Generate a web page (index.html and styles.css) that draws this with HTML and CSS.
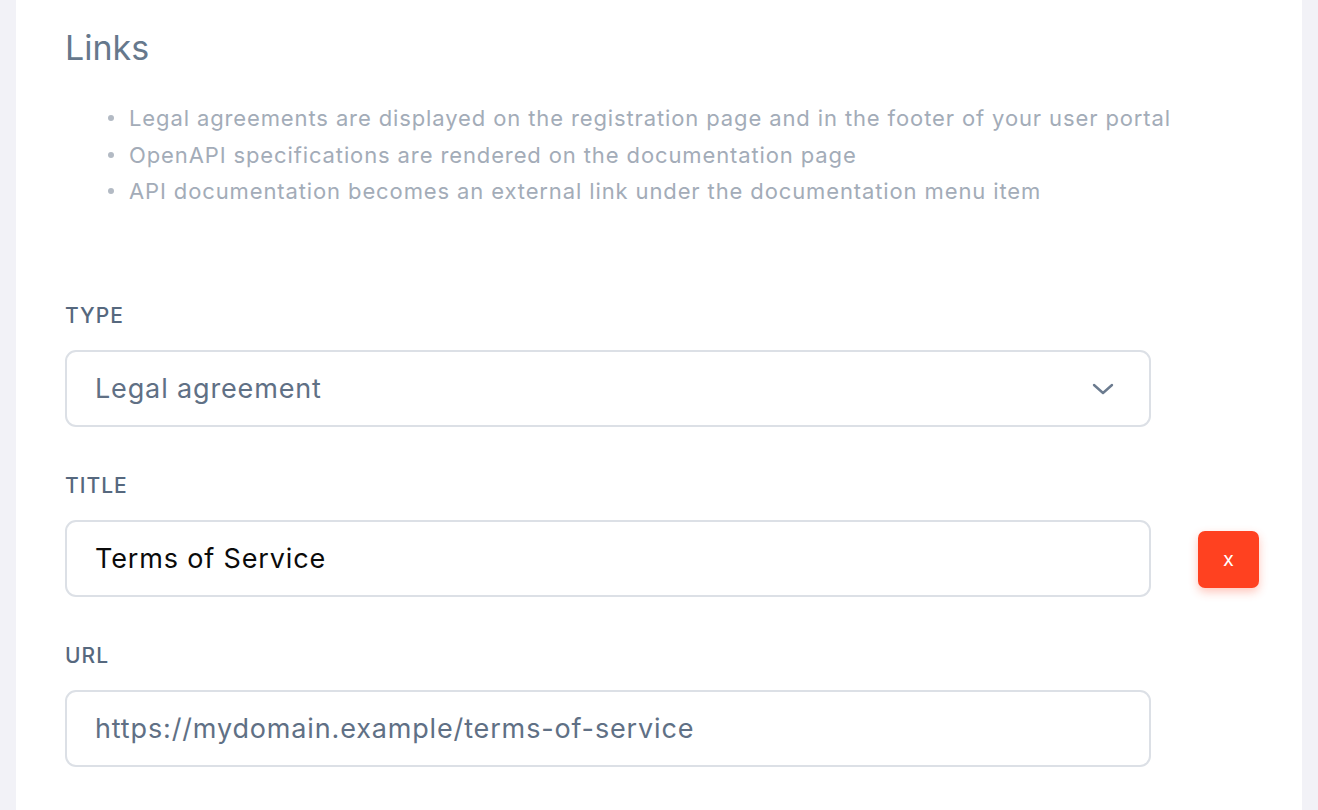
FILE: index.html
```html
<!DOCTYPE html>
<html>
<head>
<meta charset="utf-8">
<link rel="stylesheet" href="styles.css">
</head>
<body>
<div class="card">
  <h2 class="title">Links</h2>
  <ul class="notes">
    <li>Legal agreements are displayed on the registration page and in the footer of your user portal</li>
    <li>OpenAPI specifications are rendered on the documentation page</li>
    <li>API documentation becomes an external link under the documentation menu item</li>
  </ul>
  <div class="form">
    <div class="field">
      <label class="label">TYPE</label>
      <div class="row">
        <div class="input select">
          <span class="value muted">Legal agreement</span>
          <svg class="chev" width="22" height="14" viewBox="0 0 22 14"><path d="M2 3 L11 11 L20 3" fill="none" stroke="#6b7b8f" stroke-width="2.4" stroke-linecap="round" stroke-linejoin="round"/></svg>
        </div>
      </div>
    </div>
    <div class="field">
      <label class="label">TITLE</label>
      <div class="row">
        <div class="input"><span class="value dark">Terms of Service</span></div>
        <button class="remove">x</button>
      </div>
    </div>
    <div class="field">
      <label class="label">URL</label>
      <div class="row">
        <div class="input"><span class="value muted">https://mydomain.example/terms-of-service</span></div>
      </div>
    </div>
  </div>
</div>
</body>
</html>
```

FILE: styles.css
```css
html, body {
  margin: 0;
  padding: 0;
  background: #f2f2f7;
  font-family: Inter, "Noto Sans", sans-serif;
}
.card {
  margin: 0 16px;
  background: #ffffff;
  min-height: 810px;
  padding: 26px 0 0 49px;
  box-sizing: border-box;
}
.title {
  margin: 0;
  font-size: 34px;
  font-weight: 400;
  color: #66788c;
  line-height: 44px;
}
.notes {
  margin: 30px 0 0 0;
  padding-left: 64px;
  list-style: none;
  color: #a3acb8;
  font-size: 22px;
  letter-spacing: 0.88px;
  line-height: 36.5px;
}
.notes li {
  position: relative;
}
.notes li::before {
  content: "";
  position: absolute;
  left: -21px;
  top: 15px;
  width: 6px;
  height: 6px;
  border-radius: 50%;
  background: #b3bac4;
}
.form {
  margin-top: 94px;
  display: flex;
  flex-direction: column;
  gap: 47px;
}
.field {
  display: flex;
  flex-direction: column;
  gap: 22px;
}
.label {
  font-size: 21px;
  font-weight: 500;
  color: #56687e;
  letter-spacing: 1px;
  line-height: 24px;
}
.row {
  display: flex;
  align-items: center;
  gap: 47px;
}
.input {
  width: 1086px;
  height: 77px;
  box-sizing: border-box;
  border: 2px solid #dce0e6;
  border-radius: 11px;
  padding: 0 28px;
  display: flex;
  align-items: center;
  justify-content: space-between;
}
.value {
  font-size: 27px;
  letter-spacing: 0.85px;
}
.muted { color: #607085; }
.dark { color: #0b0b0b; }
.chev { margin-right: 7px; margin-top: 2px; }
.remove {
  width: 61px;
  height: 57px;
  border: none;
  border-radius: 7px;
  background: #ff4120;
  color: #ffffff;
  font-family: Inter, sans-serif;
  font-size: 20px;
  box-shadow: 0 4px 10px rgba(255, 65, 32, 0.3);
  padding: 0;
  margin-top: 2px;
}
```
